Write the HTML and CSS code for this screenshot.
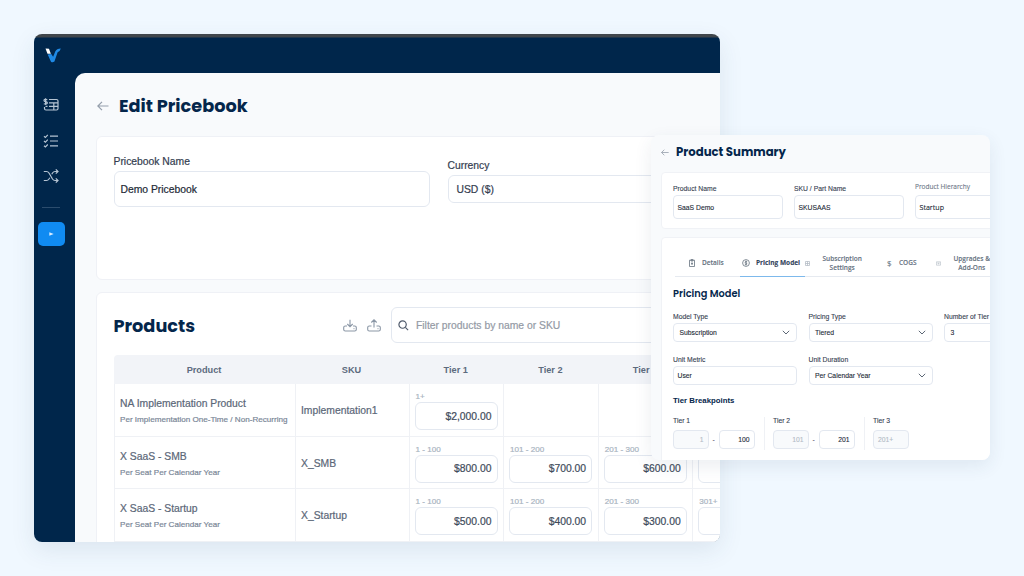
FILE: index.html
```html
<!DOCTYPE html>
<html lang="en">
  <head>
    <meta charset="UTF-8" />
    <meta name="viewport" content="width=device-width, initial-scale=1.0" />
    <title>Edit Pricebook</title>
    <link rel="stylesheet" href="styles.css">
  </head>
  <body>
    <div class="window">
      <aside class="sidebar">
        <svg class="logo" viewBox="0 0 18 16">
          <path d="M0.5 .5 L4.2 .8 L6.2 6 L2.6 6 Z" fill="#fff" />
          <path d="M2.8 7 L6.6 6.4 L8.6 9.4 L11 3.4 Q12.2 .6 16.8 .4 Q15.8 3.8 13.4 4.6 L10 14.4 Q8 16 6.3 14.6 Z" fill="#1f8ae6" />
        </svg>
        <svg class="nav-icon" viewBox="0 0 16 14">
          <path d="M6 1.5H13.5Q15 1.5 15 3V10.5Q15 12 13.5 12H3Q1.5 12 1.5 10.5V9M6 4.8H15M6 8.3H15M10.8 4.8V12M4.5 8.3H2.5" />
          <path d="M4.3 1.7Q1.2.6 1 2.4Q1 3.4 2.6 3.7Q4.6 4.1 4.3 5.3Q3.6 6.7 .8 5.7M2.6 .2V7" />
        </svg>
        <svg class="nav-icon" viewBox="0 0 16 14">
          <path d="M7 2.2H15M7 7H15M7 11.8H15M1 2.2L2.4 3.4L4.8.9M1 7L2.4 8.2L4.8 5.7M1 11.8L2.4 13L4.8 10.5" />
        </svg>
        <svg class="nav-icon" viewBox="0 0 16 14">
          <path d="M.8 2.5H3.5Q5 2.5 6 4L9.5 10Q10.5 11.5 12 11.5H15M.8 11.5H3.5Q5 11.5 6 10L6.7 8.8M8.8 5.2L9.5 4Q10.5 2.5 12 2.5H15M12.8.4L15 2.5L12.8 4.6M12.8 9.4L15 11.5L12.8 13.6" />
        </svg>
        <hr class="nav-rule">
        <button class="nav-toggle">
          <svg viewBox="0 0 5 4"><path d="M.3 .3L4.7 2L.3 3.7Z" fill="#d9edff" /></svg>
        </button>
      </aside>

      <main class="page">
        <header class="page-head">
          <svg class="back" viewBox="0 0 12 10"><path d="M11.5 5H.8M5 .8L.8 5L5 9.2" /></svg>
          <h1>Edit Pricebook</h1>
        </header>

        <section class="card details">
          <div class="field">
            <label>Pricebook Name</label>
            <div class="input">Demo Pricebook</div>
          </div>
          <div class="field currency">
            <label>Currency</label>
            <div class="input">USD ($)</div>
          </div>
        </section>

        <section class="card products">
          <div class="toolbar">
            <h2>Products</h2>
            <svg class="tool" viewBox="0 0 14 13"><path d="M7 .7V7.5M4.3 5L7 7.7L9.7 5M4 7H2.3Q.7 7 .7 8.6V10.4Q.7 12 2.3 12H11.7Q13.3 12 13.3 10.4V8.6Q13.3 7 11.7 7H10M10.6 9.6H11.4" /></svg>
            <svg class="tool" viewBox="0 0 14 13"><path d="M7 8.5V1M4.3 3.5L7 .8L9.7 3.5M4.5 7H2.3Q.7 7 .7 8.6V10.4Q.7 12 2.3 12H11.7Q13.3 12 13.3 10.4V8.6Q13.3 7 11.7 7H9.5M10.6 9.6H11.4" /></svg>
            <div class="search">
              <svg viewBox="0 0 12 12"><circle cx="5" cy="5" r="4" /><path d="M8 8L11 11" /></svg>
              Filter products by name or SKU
            </div>
          </div>

          <div class="table">
            <div class="th">Product</div>
            <div class="th">SKU</div>
            <div class="th">Tier 1</div>
            <div class="th">Tier 2</div>
            <div class="th">Tier 3</div>
            <div class="th"></div>

            <div class="td name">NA Implementation Product<small>Per Implementation One-Time / Non-Recurring</small></div>
            <div class="td sku">Implementation1</div>
            <div class="td tier"><span>1+</span><div class="price">$2,000.00</div></div>
            <div class="td"></div>
            <div class="td"></div>
            <div class="td"></div>

            <div class="td name">X SaaS - SMB<small>Per Seat Per Calendar Year</small></div>
            <div class="td sku">X_SMB</div>
            <div class="td tier"><span>1 - 100</span><div class="price">$800.00</div></div>
            <div class="td tier"><span>101 - 200</span><div class="price">$700.00</div></div>
            <div class="td tier"><span>201 - 300</span><div class="price">$600.00</div></div>
            <div class="td tier"><span>301+</span><div class="price"></div></div>

            <div class="td name">X SaaS - Startup<small>Per Seat Per Calendar Year</small></div>
            <div class="td sku">X_Startup</div>
            <div class="td tier"><span>1 - 100</span><div class="price">$500.00</div></div>
            <div class="td tier"><span>101 - 200</span><div class="price">$400.00</div></div>
            <div class="td tier"><span>201 - 300</span><div class="price">$300.00</div></div>
            <div class="td tier"><span>301+</span><div class="price"></div></div>
          </div>
        </section>
      </main>
    </div>

    <!-- Product summary panel, floats over the window -->
    <div class="summary">
      <header class="summary-head">
        <svg class="back" viewBox="0 0 12 10"><path d="M11.5 5H.8M5 .8L.8 5L5 9.2" /></svg>
        <h2>Product Summary</h2>
      </header>

      <section class="panel basics">
        <div class="field"><label>Product Name</label><div class="input">SaaS Demo</div></div>
        <div class="field"><label>SKU / Part Name</label><div class="input">SKUSAAS</div></div>
        <div class="field hierarchy"><label>Product Hierarchy</label><div class="input">Startup</div></div>
      </section>

      <section class="panel pricing">
        <nav class="tabs">
          <div class="tab">
            <svg viewBox="0 0 8 8"><path d="M1.5 1.2H6.5V7.5H1.5ZM3 .6H5V2H3ZM4 3.3V6M3 4.6H5" /></svg>
            <span>Details</span>
          </div>
          <div class="tab active">
            <svg viewBox="0 0 8 8"><circle cx="4" cy="4" r="3.4" /><path d="M5.2 2.8Q3 2 3 3.2Q3.2 4 4.2 4Q5.3 4.4 4.8 5.2Q4 5.8 2.8 5.1M4 1.6V6.4" /></svg>
            <span>Pricing Model</span>
          </div>
          <div class="tab subscription">
            <svg class="mini" viewBox="0 0 5 5"><path d="M.5 .5V4.5M2.5 .5V4.5M4.5 .5V4.5M.5 .5H4.5M.5 2.5H4.5M.5 4.5H4.5" /></svg>
            <span>Subscription<br>Settings</span>
          </div>
          <div class="tab cogs">
            <b>$</b>
            <span>COGS</span>
          </div>
          <div class="tab upgrades">
            <svg class="mini" viewBox="0 0 6 5"><path d="M.5 .5H5.5V4.5H.5ZM1.5 2H4.5M3 2V3.5" /></svg>
            <span>Upgrades &amp;<br>Add-Ons</span>
          </div>
        </nav>

        <h3>Pricing Model</h3>
        <div class="form">
          <div class="field"><label>Model Type</label><div class="input select">Subscription<svg viewBox="0 0 8 5"><path d="M.8 .8L4 4L7.2 .8" /></svg></div></div>
          <div class="field"><label>Pricing Type</label><div class="input select">Tiered<svg viewBox="0 0 8 5"><path d="M.8 .8L4 4L7.2 .8" /></svg></div></div>
          <div class="field"><label>Number of Tier</label><div class="input select">3</div></div>
          <div class="field"><label>Unit Metric</label><div class="input">User</div></div>
          <div class="field"><label>Unit Duration</label><div class="input select">Per Calendar Year<svg viewBox="0 0 8 5"><path d="M.8 .8L4 4L7.2 .8" /></svg></div></div>
        </div>

        <h4>Tier Breakpoints</h4>
        <div class="breakpoints">
          <div class="bp">
            <label>Tier 1</label>
            <div class="range"><div class="num off">1</div><i>-</i><div class="num">100</div></div>
          </div>
          <div class="bp">
            <label>Tier 2</label>
            <div class="range"><div class="num off">101</div><i>-</i><div class="num">201</div></div>
          </div>
          <div class="bp">
            <label>Tier 3</label>
            <div class="range"><div class="num off open">201+</div></div>
          </div>
        </div>
      </section>
    </div>
  </body>
</html>
```
FILE: styles.css
```css
* {
  box-sizing: border-box;
}
body {
  margin: 0;
  height: 576px;
  padding: 34px;
  overflow: hidden;
  background: #f0f8ff;
  font-family: 'Liberation Sans', Arial, sans-serif;
  font-size: 10.35px;
  color: #343d50;
  -webkit-text-stroke: 0.2px;
}
h1,
h2,
h3,
h4 {
  margin: 0;
  font-family: Poppins, Inter, sans-serif;
  font-weight: 700;
  color: #04264b;
  -webkit-text-stroke: 0;
}
svg {
  display: block;
  flex: none;
  fill: none;
}
label {
  display: block;
}

/* main window */
.window {
  display: flex;
  width: 686px;
  height: 508px;
  overflow: hidden;
  border-radius: 8px;
  background: linear-gradient(#40464b 3px, #00264b 4px);
  box-shadow: 0 8px 24px rgba(40, 70, 100, 0.1);
}
.sidebar {
  display: flex;
  flex-direction: column;
  align-items: center;
  flex: none;
  width: 41px;
  padding: 14px 7px 0 0;
}
.logo {
  width: 17px;
  height: 15px;
  margin: 0 0 35px 4px;
}
.nav-icon {
  width: 16px;
  height: 14px;
  margin-bottom: 21.5px;
  stroke: #b5c4d3;
  stroke-width: 1.2;
}
.nav-rule {
  width: 18px;
  height: 1px;
  margin: 2px 0 14px;
  border: 0;
  background: #2b4c6d;
}
.nav-toggle {
  display: grid;
  place-items: center;
  width: 27px;
  height: 24px;
  padding: 0;
  border: 0;
  border-radius: 5px;
  background: #108bf2;
}
.nav-toggle svg {
  width: 5px;
  height: 4px;
}
.page {
  flex: none;
  width: 800px;
  margin-top: 39px;
  padding-left: 20.5px;
  border-top-left-radius: 10px;
  background: #f8fafc;
}
.page-head {
  display: flex;
  align-items: center;
  gap: 10px;
  height: 63px;
  padding: 2px 0 0 1.5px;
}
.back {
  width: 12px;
  height: 10px;
  stroke: #949eab;
  stroke-width: 1.2;
}
h1,
.toolbar h2 {
  font-size: 17.7px;
}
.card {
  border: 1.5px solid #eff1f6;
  border-radius: 6px;
  background: #fff;
}
.details {
  display: flex;
  gap: 17.5px;
  height: 144px;
  padding: 18px 17px;
}
.field label {
  line-height: 14px;
}
.input {
  display: flex;
  align-items: center;
  border: 1px solid #e3e8f0;
  background: #fff;
}
.details .input {
  width: 316.5px;
  height: 36px;
  margin-top: 2px;
  padding-left: 6px;
  border-width: 1.5px;
  border-radius: 6px;
  color: #222936;
}
.details .currency {
  padding-top: 4px;
}
.details .currency .input {
  height: 28px;
  padding-left: 8px;
  color: #343d50;
}
.products {
  height: 300px;
  margin-top: 12px;
  padding: 14px 17px;
}
.toolbar {
  display: flex;
  align-items: center;
  height: 36px;
}
.toolbar h2 {
  width: 229.5px;
}
.tool {
  width: 14px;
  height: 13px;
  margin-right: 10px;
  stroke: #8b97a6;
  stroke-width: 1.1;
}
.search {
  display: flex;
  align-items: center;
  gap: 7px;
  width: 300px;
  height: 36px;
  padding-left: 6px;
  border: 1px solid #e3e8f0;
  border-radius: 6px;
  color: #949aa5;
}
.search svg {
  width: 11px;
  height: 11px;
  stroke: #4f5a6b;
  stroke-width: 1.3;
}

/* products table */
.table {
  display: grid;
  grid-template-columns: 181px 114px 94.6px 94.6px 94.6px 94.6px;
  grid-template-rows: 29px repeat(3, 52.5px);
  width: 674px;
  margin-top: 12px;
  border-radius: 4px 4px 0 0;
  overflow: hidden;
}
.th {
  display: grid;
  place-items: center;
  background: #f2f4f8;
  font-size: 9.2px;
  font-weight: 700;
  color: #5d6b7e;
  -webkit-text-stroke: 0;
}
.td {
  border-left: 1px solid #eff1f5;
  border-bottom: 1px solid #eff1f5;
  color: #5b6778;
}
.name {
  padding: 14px 0 0 5.5px;
  line-height: 12px;
  white-space: nowrap;
}
.name small {
  display: block;
  margin-top: 5px;
  font-size: 8.1px;
  line-height: 10px;
  color: #7a8797;
}
.sku {
  display: flex;
  align-items: center;
  padding: 2px 0 0 5.5px;
}
.tier {
  padding: 8px 5px 0;
}
.tier span {
  display: block;
  padding-left: 1px;
  font-size: 8.1px;
  line-height: 10px;
  color: #a9b4c1;
}
.price {
  display: flex;
  align-items: center;
  justify-content: flex-end;
  width: 83px;
  height: 28px;
  padding-right: 5px;
  border: 1.5px solid #e3e8f0;
  border-radius: 6px;
  color: #414b5b;
}

/* product summary */
.summary {
  position: absolute;
  left: 651px;
  top: 135px;
  width: 339px;
  height: 325px;
  padding-left: 10px;
  overflow: hidden;
  border-radius: 8px;
  background: #f8fafc;
  box-shadow: 0 6px 18px rgba(40, 70, 100, 0.09);
  font-size: 6.8px;
  -webkit-text-stroke: 0.1px;
}
.summary-head {
  display: flex;
  align-items: center;
  gap: 7px;
  height: 37px;
  padding-bottom: 2px;
}
.summary .back {
  width: 8px;
  height: 7px;
}
.summary-head h2 {
  font-size: 11.7px;
}
.panel {
  width: 360px;
  border: 1px solid #f0f2f6;
  border-radius: 4px;
  background: #fff;
}
.basics {
  display: flex;
  gap: 11px;
  height: 57px;
  padding: 12px 11px;
}
.summary label {
  line-height: 8px;
}
.summary .input {
  height: 24px;
  border-radius: 4px;
  color: #222936;
}
.basics .input {
  width: 110px;
  margin-top: 2px;
  padding-left: 3.5px;
}
.hierarchy label {
  margin-top: -2px;
  padding-bottom: 2px;
  font-family: 'Open Sans', sans-serif;
  font-size: 6.5px;
  color: #6b7686;
}
.hierarchy .input {
  font-family: 'Open Sans', sans-serif;
  font-size: 7.1px;
}
.pricing {
  height: 240px;
  margin-top: 8px;
  padding: 11px 11px 0;
}
.tabs {
  display: flex;
  width: 330px;
  height: 28px;
  margin-left: 2px;
  border-bottom: 1px solid #e6eaf0;
  font-family: 'Open Sans', sans-serif;
  font-size: 6.5px;
  font-weight: 600;
  line-height: 9.5px;
  color: #66727f;
}
.tab {
  display: flex;
  align-items: center;
  flex: none;
  height: 28px;
  text-align: center;
}
.tab svg {
  width: 8px;
  height: 8px;
  margin-right: 6px;
  stroke: #66727f;
  stroke-width: 0.8;
}
.tab:first-child {
  width: 65px;
  padding-left: 13px;
}
.tab.active {
  width: 65px;
  padding-left: 2px;
  border-bottom: 1px solid #7db9ec;
  font-weight: 700;
  color: #33445c;
}
.tab .mini {
  width: 5px;
  height: 5px;
  margin-right: 12.5px;
  stroke: #adb6c0;
  stroke-width: 0.7;
}
.subscription {
  width: 82px;
}
.cogs b {
  width: 12px;
  font-size: 8px;
  font-weight: 400;
  text-align: left;
}
.cogs {
  width: 49px;
}
h3 {
  margin-top: 10px;
  font-size: 9.8px;
  font-weight: 600;
  line-height: 14px;
}
.form {
  display: grid;
  grid-template-columns: repeat(3, 124px);
  gap: 14px 11.5px;
  margin-top: 12px;
}
.form .input {
  height: 19px;
  margin-top: 2px;
  padding: 0 6px 0 3.5px;
}
.form .select {
  justify-content: space-between;
  padding-left: 5.5px;
}
.select svg {
  width: 8px;
  height: 5px;
  stroke: #5d6775;
  stroke-width: 1;
}
h4 {
  margin-top: 10px;
  font-family: 'Liberation Sans', Arial, sans-serif;
  font-size: 7.8px;
  line-height: 11px;
}
.breakpoints {
  display: flex;
  margin-top: 11px;
}
.bp {
  height: 33px;
  padding-right: 9px;
}
.bp + .bp {
  padding-left: 8.5px;
  border-left: 1px solid #eff1f5;
}
.range {
  display: flex;
  align-items: center;
  margin-top: 4.5px;
}
.range i {
  width: 10.5px;
  font-style: normal;
  text-align: center;
}
.num {
  display: flex;
  align-items: center;
  justify-content: flex-end;
  width: 35.5px;
  height: 19px;
  padding: 0 4px;
  border: 1px solid #e3e8f0;
  border-radius: 4px;
  color: #222936;
}
.off {
  background: #f8fafc;
  color: #b3bbc6;
}
.open {
  justify-content: flex-start;
}
```
